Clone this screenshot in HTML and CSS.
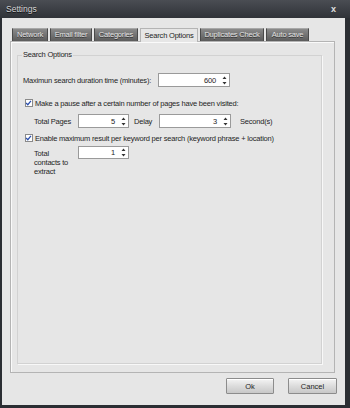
FILE: index.html
```html
<!DOCTYPE html>
<html>
<head>
    <title>Settings</title>
    <link rel="stylesheet" href="styles.css">
</head>
<body>
    <div class="window">
        <div class="titlebar">
            <span class="title">Settings</span>
            <span class="close">x</span>
        </div>
        <div class="client">
            <div class="tabs">
                <div class="tab tab-network">Network</div>
                <div class="tab tab-email">Email filter</div>
                <div class="tab tab-categories">Categories</div>
                <div class="tab tab-search active">Search Options</div>
                <div class="tab tab-duplicates">Duplicates Check</div>
                <div class="tab tab-autosave">Auto save</div>
            </div>
            <div class="panel">
                <fieldset class="group">
                    <legend>Search Options</legend>

                    <div class="row row-duration">
                        <span class="label label-duration">Maximun search duration time (minutes):</span>
                        <div class="spin spin-wide">
                            <span class="value">600</span>
                            <svg class="arrows" width="5" height="9" viewBox="0 0 5 9"><path d="M2.5 0.5 L4.5 3 L0.5 3 Z M0.5 6 L4.5 6 L2.5 8.5 Z" fill="#333"/></svg>
                        </div>
                    </div>

                    <div class="row check-row check-pause">
                        <span class="checkbox">
                            <svg width="8" height="8" viewBox="0 0 8 8"><path d="M1.3 4 L3.2 6 L6.8 1.5" fill="none" stroke="#2a4fae" stroke-width="1.4"/></svg>
                        </span>
                        <span>Make a pause after a certain number of pages have been visited:</span>
                    </div>

                    <div class="row sub-row row-pages">
                        <span class="label label-short">Total Pages</span>
                        <div class="spin spin-narrow">
                            <span class="value">5</span>
                            <svg class="arrows" width="5" height="9" viewBox="0 0 5 9"><path d="M2.5 0.5 L4.5 3 L0.5 3 Z M0.5 6 L4.5 6 L2.5 8.5 Z" fill="#333"/></svg>
                        </div>
                        <span class="label label-delay">Delay</span>
                        <div class="spin spin-wide">
                            <span class="value">3</span>
                            <svg class="arrows" width="5" height="9" viewBox="0 0 5 9"><path d="M2.5 0.5 L4.5 3 L0.5 3 Z M0.5 6 L4.5 6 L2.5 8.5 Z" fill="#333"/></svg>
                        </div>
                        <span class="unit">Second(s)</span>
                    </div>

                    <div class="row check-row check-max">
                        <span class="checkbox">
                            <svg width="8" height="8" viewBox="0 0 8 8"><path d="M1.3 4 L3.2 6 L6.8 1.5" fill="none" stroke="#2a4fae" stroke-width="1.4"/></svg>
                        </span>
                        <span>Enable maximum result per keyword per search (keyword phrase + location)</span>
                    </div>

                    <div class="row sub-row row-contacts">
                        <span class="label label-short label-multi">Total<br>contacts to<br>extract</span>
                        <div class="spin spin-narrow">
                            <span class="value">1</span>
                            <svg class="arrows" width="5" height="9" viewBox="0 0 5 9"><path d="M2.5 0.5 L4.5 3 L0.5 3 Z M0.5 6 L4.5 6 L2.5 8.5 Z" fill="#333"/></svg>
                        </div>
                    </div>
                </fieldset>
            </div>
            <div class="buttons">
                <button class="btn btn-ok">Ok</button>
                <button class="btn">Cancel</button>
            </div>
        </div>
    </div>
</body>
</html>
```

FILE: styles.css
```css
* {
    margin: 0;
    padding: 0;
    box-sizing: border-box;
}

body {
    width: 350px;
    height: 408px;
    background: #2b2e33;
    font-family: 'Liberation Sans', Arial, sans-serif;
    font-size: 7.5px;
    letter-spacing: -0.2px;
    color: #1e1e1e;
    overflow: hidden;
}

.window {
    display: flex;
    flex-direction: column;
    height: 408px;
}

.titlebar {
    height: 18px;
    display: flex;
    align-items: center;
    justify-content: space-between;
    padding: 0 14px 0 6px;
    background: linear-gradient(#4a4d53, #303338);
    color: #d6d6d6;
    font-size: 8.5px;
    letter-spacing: 0;
}

.title {
    text-shadow: 0 1px 0 #111;
}

.close {
    font-size: 9px;
    font-weight: bold;
    color: #e0e0e0;
}

.client {
    flex: 1;
    margin: 0 5px 3px 2px;
    background: #e6e6e6;
    display: flex;
    flex-direction: column;
    padding: 10px 10px 11px 8px;
}

/* tab strip */
.tabs {
    display: flex;
    align-items: flex-end;
    gap: 2px;
    height: 13px;
    padding-left: 2px;
}

.tab {
    height: 13px;
    line-height: 12px;
    text-align: center;
    white-space: nowrap;
    color: #e4e4e4;
    background: linear-gradient(#8a8a8a, #5c5c5c);
    border: 1px solid #4a4a4a;
    border-bottom: none;
    border-top-color: #a8a8a8;
    text-shadow: 0 1px 0 #333;
}

.tab-network { width: 36px; }
.tab-email { width: 42px; }
.tab-categories { width: 44px; }
.tab-search { width: 58px; }
.tab-duplicates { width: 64px; }
.tab-autosave { width: 43px; }

.tab.active {
    height: 14px;
    line-height: 13px;
    color: #1e1e1e;
    background: #e6e6e6;
    border: 1px solid #b4b4b4;
    border-bottom: none;
    text-shadow: none;
    margin-bottom: -1px;
    position: relative;
}

.panel {
    flex: 1;
    border: 1px solid #b4b4b4;
    box-shadow: inset 1px 1px 0 #fafafa;
    display: flex;
    flex-direction: column;
}

.group {
    margin: 8px 12px 8px 6px;
    flex: 1;
    border: 1px solid #d2d2d2;
    box-shadow: 1px 1px 0 #f8f8f8;
    padding: 0 5px;
}

.group legend {
    line-height: 10px;
    margin-left: -1px;
    padding: 0 1px;
}

.row {
    display: flex;
    align-items: center;
    white-space: nowrap;
}

.row-duration {
    margin-top: 13px;
    height: 14px;
}

.label-duration { width: 135px; }

.check-row {
    height: 10px;
    padding-left: 2px;
    gap: 2px;
}

.check-pause { margin-top: 11px; }
.check-max { margin-top: 5px; }

.checkbox {
    width: 8px;
    height: 8px;
    background: #fff;
    border: 1px solid #8a8a8a;
    display: flex;
}

.checkbox svg {
    margin: -1px 0 0 -1px;
}

.sub-row {
    padding-left: 11px;
}

.row-pages {
    margin-top: 6px;
    height: 14px;
}

.row-contacts {
    margin-top: 3px;
    align-items: flex-start;
}

.label-short { width: 44px; }

.label-multi {
    line-height: 9px;
    padding-top: 3px;
}

.label-delay {
    width: 25px;
    margin-left: 5px;
}

.unit { margin-left: 9px; }

/* spin box */
.spin {
    height: 14px;
    background: #fff;
    border: 1px solid #9a9a9a;
    display: flex;
    align-items: center;
    justify-content: flex-end;
    padding-right: 2px;
    gap: 6px;
}

.spin-wide { width: 72px; }
.spin-narrow { width: 51px; }

.row-contacts .spin { height: 13px; }

.buttons {
    display: flex;
    justify-content: flex-end;
    gap: 14px;
    margin: 5px -2px 0 0;
}

.btn {
    width: 49px;
    height: 16px;
    font-family: 'Liberation Sans', Arial, sans-serif;
    font-size: 7.5px;
    color: #1e1e1e;
    background: linear-gradient(#f4f4f4 0%, #dcdcdc 50%, #c8c8c8 100%);
    border: 1px solid #8c8c8c;
    border-radius: 1px;
    box-shadow: inset 0 1px 0 #fff;
}

.btn-ok { width: 48px; }
```
